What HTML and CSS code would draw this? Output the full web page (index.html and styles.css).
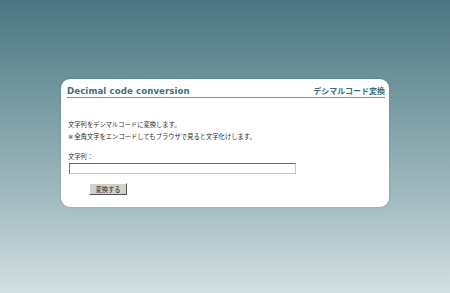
FILE: index.html
```html
<!DOCTYPE html>
<html lang="ja">
<head>
    <meta charset="UTF-8">
    <meta name="viewport" content="width=device-width, initial-scale=1.0">
    <title>Decimal code conversion</title>
    <link rel="stylesheet" href="styles.css">
</head>
<body>
    <div class="card">
        <div class="card-head">
            <h1>Decimal code conversion</h1>
            <span class="jp-title">デシマルコード変換</span>
        </div>

        <div class="card-body">
            <p class="note">文字列をデシマルコードに変換します。<br><span class="mark">※</span>全角文字をエンコードしてもブラウザで見ると文字化けします。</p>

            <label for="src">文字列：</label>
            <input type="text" id="src">

            <button id="convert-btn">変換する</button>
        </div>
    </div>
</body>
</html>
```

FILE: styles.css
```css
:root {
    --teal: #3d6f7b;
    --line: #6f959d;
    --text: #2b2b2b;
}

html, body {
    height: 100%;
}

body {
    margin: 0;
    font-family: "Noto Sans CJK JP", "DejaVu Sans", sans-serif;
    background: linear-gradient(180deg, #4a7582 0%, #6e939b 28%, #a5bdc2 70%, #d3e0e3 100%);
    overflow: hidden;
}

.card {
    width: 328px;
    height: 128px;
    margin: 79px auto 0;
    box-sizing: border-box;
    background: #fff;
    border-radius: 9px;
    box-shadow: 0 0 2px rgba(40, 70, 80, 0.3);
    padding: 5px 4px 0 6px;
}

.card-head {
    display: flex;
    justify-content: space-between;
    align-items: baseline;
    border-bottom: 1px solid var(--line);
    height: 13px;
    line-height: 13px;
}

h1 {
    margin: 0;
    font-family: "DejaVu Sans", sans-serif;
    font-size: 8.6px;
    font-weight: bold;
    color: var(--teal);
    letter-spacing: 0.1px;
}

.jp-title {
    font-size: 8px;
    font-weight: bold;
    color: var(--teal);
}

.card-body {
    padding-left: 1px;
    font-size: 6.3px;
    color: var(--text);
}

.note {
    margin: 21px 0 0;
    line-height: 12px;
}

/* reference mark, kept out of the emoji font */
.mark {
    font-family: "DejaVu Sans", "Noto Sans CJK JP", sans-serif;
    display: inline-block;
    width: 6.3px;
    color: var(--text);
}

label {
    display: block;
    margin-top: 8px;
    line-height: 12px;
}

input {
    display: block;
    box-sizing: border-box;
    width: 227px;
    height: 11px;
    margin: 0 0 0 1px;
    padding: 0;
    border: 1px solid #c8c8c8;
    border-top-color: #666;
    border-left-color: #777;
    background: #fff;
}

button {
    display: block;
    box-sizing: border-box;
    width: 38px;
    height: 12px;
    margin: 9px 0 0 21px;
    padding: 0;
    font-family: inherit;
    font-size: 6.3px;
    color: #222;
    background: #d4d0c8;
    border: 1px solid;
    border-color: #fff #555 #555 #fff;
}
```
